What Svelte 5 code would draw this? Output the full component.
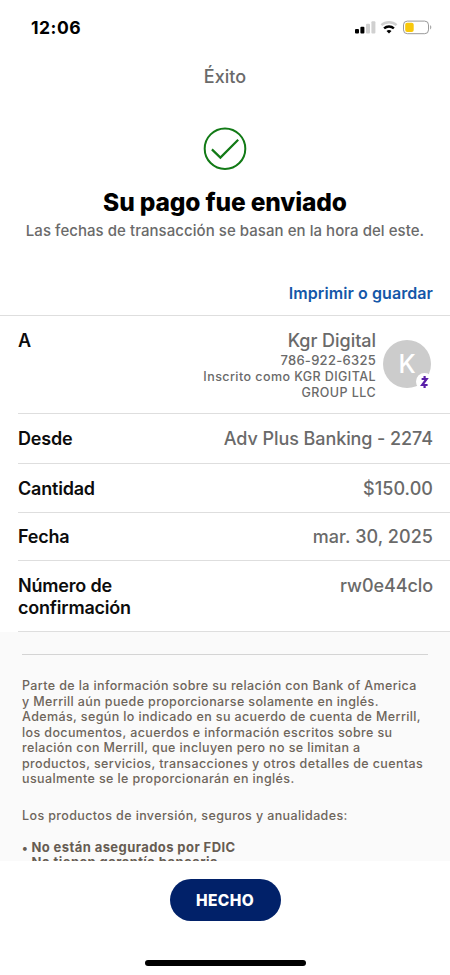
<script lang="ts">
	interface Detail {
		id: string;
		label: string[];
		value: string;
	}

	const details: Detail[] = [
		{ id: 'from', label: ['Desde'], value: 'Adv Plus Banking - 2274' },
		{ id: 'amount', label: ['Cantidad'], value: '$150.00' },
		{ id: 'date', label: ['Fecha'], value: 'mar. 30, 2025' },
		{ id: 'confirmation', label: ['Número de', 'confirmación'], value: 'rw0e44clo' }
	];

	const disclosure = [
		'Parte de la información sobre su relación con Bank of America',
		'y Merrill aún puede proporcionarse solamente en inglés.',
		'Además, según lo indicado en su acuerdo de cuenta de Merrill,',
		'los documentos, acuerdos e información escritos sobre su',
		'relación con Merrill, que incluyen pero no se limitan a',
		'productos, servicios, transacciones y otros detalles de cuentas',
		'usualmente se le proporcionarán en inglés.'
	];

	const notices = ['No están asegurados por FDIC', 'No tienen garantía bancaria'];
</script>

<div class="screen">
	<div class="status-bar">
		<span class="time">12:06</span>
		<svg class="status-icons" width="80" height="16" viewBox="0 0 80 16">
			<rect x="0" y="9" width="4" height="4.6" rx="1" />
			<rect x="5.4" y="6.8" width="4" height="6.8" rx="1" />
			<rect x="11" y="3.8" width="4" height="9.8" rx="1" fill="#d0d0d0" />
			<rect x="16.4" y="1.3" width="4" height="12.3" rx="1" fill="#d0d0d0" />
			<g fill="none" stroke-width="2.4">
				<path d="M26.4 5.2a11.4 11.4 0 0 1 15.2 0" stroke="#d0d0d0" />
				<path d="M29.1 8.4a7.3 7.3 0 0 1 9.8 0" stroke="#000" />
			</g>
			<path d="M31.5 11.1a3.8 3.8 0 0 1 5 0l-2.5 2.5z" />
			<rect x="48.5" y="1.1" width="25" height="12.6" rx="3.8" fill="#fff" stroke="#999" />
			<rect x="50.2" y="2.8" width="8.5" height="9.2" rx="2" fill="#f8c80c" />
			<path d="M75.2 5.3c1.4.4 1.4 3.7 0 4.1z" fill="#999" />
		</svg>
	</div>

	<header class="nav">Éxito</header>

	<section class="success">
		<svg width="44" height="44" viewBox="0 0 44 44" fill="none" stroke="#127a16" stroke-width="2">
			<circle cx="22" cy="21.7" r="20.3" />
			<path d="M8.9 22.4l8.5 8.2L35.2 12.7" stroke-width="2.2" />
		</svg>
		<h1>Su pago fue enviado</h1>
		<p>Las fechas de transacción se basan en la hora del este.</p>
	</section>

	<div class="actions">
		<span class="print">Imprimir o guardar</span>
	</div>

	<div class="details">
		<div class="row recipient">
			<span class="label">A</span>
			<div class="contact">
				<span class="name">Kgr Digital</span>
				<span class="phone">786-922-6325</span>
				<span class="enrolled">Inscrito como KGR DIGITAL<br />GROUP LLC</span>
			</div>
			<div class="avatar">
				K
				<span class="badge">
					<svg width="10" height="14" viewBox="0 0 10 14" fill="none" stroke="#5a1fa8" stroke-width="2.2">
						<path d="M1.6 4h5L2.2 10h5.4" />
						<path d="M4.6 1v2.6M4.6 10.4V13" />
					</svg>
				</span>
			</div>
		</div>
		{#each details as detail (detail.id)}
			<div class="row {detail.id}">
				<span class="label">
					{#each detail.label as line}
						<span class="line">{line}</span>
					{/each}
				</span>
				<span class="value">{detail.value}</span>
			</div>
		{/each}
	</div>

	<section class="disclosure">
		<hr />
		<p>
			{#each disclosure as line}
				<span class="line">{line}</span>
			{/each}
		</p>
		<p class="products">Los productos de inversión, seguros y anualidades:</p>
		<ul>
			{#each notices as notice}
				<li>{notice}</li>
			{/each}
		</ul>
	</section>

	<footer>
		<button type="button">HECHO</button>
		<div class="home-indicator"></div>
	</footer>
</div>

<style>
	:global(body) {
		background: #fff;
	}

	.screen {
		display: flex;
		flex-direction: column;
		width: 450px;
		height: 975px;
		overflow: hidden;
		background: #fff;
		color: #0c0c0c;
		font-family: Inter, "Liberation Sans", sans-serif;
		font-weight: 550;
		white-space: nowrap;
	}

	.status-bar {
		display: flex;
		flex: none;
		justify-content: space-between;
		height: 56px;
		padding: 0 15px 0 31px;
	}

	.time {
		margin-top: 17px;
		color: #000;
		font-size: 17.5px;
		font-weight: 700;
		line-height: 21px;
		letter-spacing: 0.5px;
	}

	.status-icons {
		margin-top: 20px;
	}

	.nav {
		flex: none;
		height: 71px;
		color: #6a6a6a;
		font-size: 18px;
		line-height: 41px;
		letter-spacing: 0.05px;
		text-align: center;
	}

	.success {
		display: flex;
		flex: none;
		flex-direction: column;
		align-items: center;
		height: 143px;
	}

	h1 {
		margin: 16px 0 0;
		color: #000;
		font-size: 24.5px;
		font-weight: 800;
		line-height: 30px;
		letter-spacing: -0.13px;
	}

	.success p {
		margin: 4px 0 0;
		color: #6a6a6a;
		font-size: 15px;
		line-height: 20px;
		letter-spacing: 0.05px;
	}

	.actions {
		flex: none;
		height: 45px;
		padding-right: 17px;
		border-bottom: 1px solid #dedede;
		color: #1457a8;
		font-size: 16px;
		font-weight: 600;
		line-height: 46px;
		letter-spacing: 0.08px;
		text-align: right;
	}

	.details {
		flex: none;
	}

	.row {
		display: flex;
		justify-content: space-between;
		box-sizing: border-box;
		height: 49px;
		margin-left: 18px;
		padding: 14px 17px 0 0;
		border-bottom: 1px solid #dedede;
		font-size: 18px;
		line-height: 22px;
	}

	.row.recipient {
		height: 98px;
		padding-right: 19px;
	}

	.row.from {
		height: 50px;
	}

	.row.date {
		height: 48px;
		padding-top: 13px;
	}

	.row.confirmation {
		height: 71px;
	}

	.label {
		font-weight: 600;
		letter-spacing: -0.2px;
	}

	.line {
		display: block;
	}

	.value {
		color: #6a6a6a;
		letter-spacing: -0.08px;
	}

	.amount .value,
	.date .value {
		letter-spacing: 0.05px;
	}

	.contact {
		display: flex;
		flex-direction: column;
		margin-left: auto;
		color: #6a6a6a;
		text-align: right;
	}

	.name {
		font-size: 18px;
		letter-spacing: -0.04px;
	}

	.phone {
		font-size: 13px;
		line-height: 17px;
		letter-spacing: 0.28px;
	}

	.enrolled {
		font-size: 12.5px;
		line-height: 15.5px;
		letter-spacing: 0.43px;
	}

	.avatar {
		position: relative;
		width: 48px;
		height: 48px;
		margin: 10px 0 0 7px;
		border-radius: 50%;
		background: #ccc;
		color: #fff;
		font-size: 25px;
		line-height: 49px;
		text-align: center;
	}

	.badge {
		position: absolute;
		right: -2px;
		bottom: -2px;
		display: flex;
		align-items: center;
		justify-content: center;
		width: 17px;
		height: 17px;
		border-radius: 50%;
		background: #fff;
	}

	.disclosure {
		flex: 1;
		min-height: 0;
		padding: 22px 22px 0;
		overflow: hidden;
		background: #fafafa;
		color: #6e655b;
		font-size: 12.5px;
		line-height: 15.55px;
		letter-spacing: 0.38px;
	}

	hr {
		margin: 0 0 23px;
		border: 0;
		border-top: 1px solid #d4d4d4;
	}

	.disclosure p {
		margin: 0;
	}

	.disclosure .products {
		margin-top: 21.5px;
	}

	ul {
		margin: 16px 0 0;
		padding: 0;
		list-style: none;
		color: #665c52;
		font-size: 13px;
		font-weight: 700;
		letter-spacing: 0.42px;
	}

	li::before {
		content: "• ";
		font-size: 12px;
	}

	footer {
		display: flex;
		flex: none;
		flex-direction: column;
		align-items: center;
		height: 114px;
		background: #fff;
	}

	button {
		width: 111px;
		height: 42px;
		margin: 18px 0 0;
		padding: 0;
		border: 0;
		border-radius: 21px;
		background: #012169;
		color: #fff;
		font-family: inherit;
		font-size: 15.5px;
		font-weight: 800;
		letter-spacing: 0.4px;
	}

	.home-indicator {
		width: 161px;
		height: 6px;
		margin-top: 39px;
		border-radius: 3px;
		background: #000;
	}
</style>
